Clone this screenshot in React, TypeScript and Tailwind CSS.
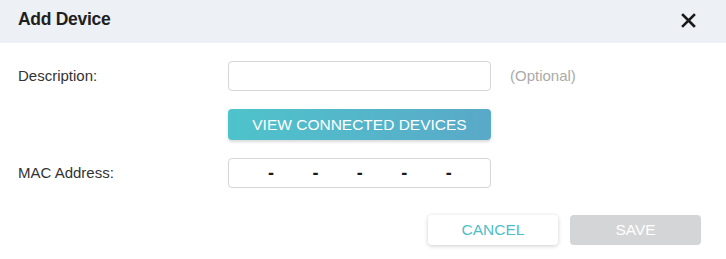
export default function App() {
  const font = { fontFamily: '"Liberation Sans", Arial, sans-serif' }
  return (
    <div className="w-[726px] h-[259px] bg-white text-[#333]" style={font}>
      {/* header */}
      <div className="h-[43px] bg-[#edf0f4] flex items-center justify-between pl-[18px] pr-[30px]">
        <h1 className="text-[17.5px] font-bold text-[#1f1f1f] tracking-[-0.3px] pb-[4px]">Add Device</h1>
        <button className="text-[#1a1a1a] pb-[2px]">
          <svg width="15" height="15" viewBox="0 0 15 15" fill="none" stroke="currentColor" strokeWidth="2.6" strokeLinecap="square">
            <path d="M2 2L13 13M13 2L2 13" />
          </svg>
        </button>
      </div>

      <div className="pl-[18px] pt-[18px]">
        <div className="flex items-center h-[30px]">
          <label className="w-[210px] text-[15px] text-[#333]">Description:</label>
          <input className="w-[263px] h-[30px] rounded-[4px] border border-[#d4d6d8] outline-none px-2 text-[15px]" />
          <span className="ml-[19px] text-[15px] text-[#aaa]">(Optional)</span>
        </div>

        <div className="flex mt-[18px]">
          <div className="w-[210px]" />
          <button className="w-[263px] h-[31px] rounded-[4px] bg-gradient-to-r from-[#4ec3cb] to-[#59a9c8] text-white text-[15.5px] shadow-[0_2px_3px_rgba(0,0,0,0.15)]">
            VIEW CONNECTED DEVICES
          </button>
        </div>

        <div className="flex items-center h-[30px] mt-[18px]">
          <label className="w-[210px] text-[15px] text-[#333]">MAC Address:</label>
          <div className="w-[263px] h-[30px] rounded-[4px] border border-[#d4d6d8] flex items-center pl-[39px]">
            {[0, 1, 2, 3, 4].map((i) => (
              <span key={i} className="w-[44.5px] text-[18px] font-bold text-[#1a1a1a] leading-none">-</span>
            ))}
          </div>
        </div>

        <div className="flex justify-end gap-[12px] mt-[27px] pr-[25px]">
          <button className="w-[130px] h-[30px] rounded-[4px] bg-white text-[#4ebfc8] text-[15.5px] shadow-[0_1px_4px_rgba(0,0,0,0.2)]">
            CANCEL
          </button>
          <button className="w-[131px] h-[30px] rounded-[4px] bg-[#d4d5d6] text-white text-[15.5px]">
            SAVE
          </button>
        </div>
      </div>
    </div>
  )
}
